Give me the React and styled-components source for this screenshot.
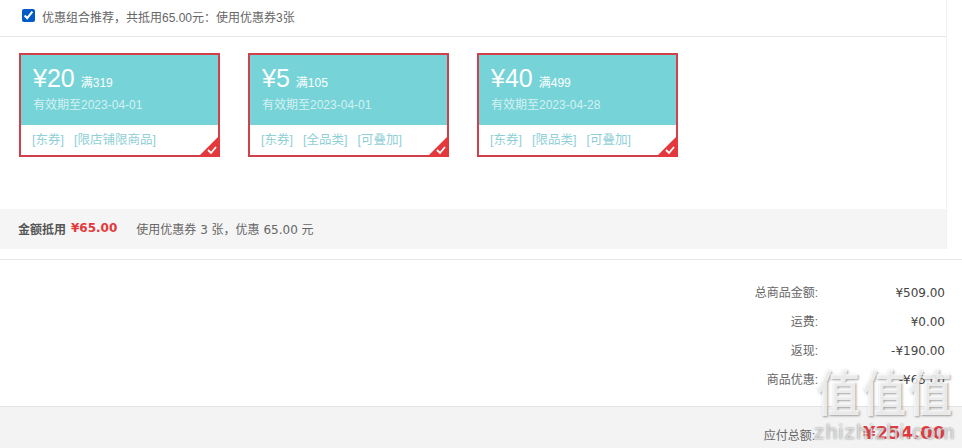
import React from 'react'
import styled, { createGlobalStyle } from 'styled-components'

const Global = createGlobalStyle`
	html, body {
		margin: 0;
		padding: 0;
		background: #fff;
		overflow: hidden;
	}
	body {
		font-family: "Liberation Sans", "Noto Sans CJK SC", sans-serif;
		font-size: 12px;
		color: #666;
	}
`

const Page = styled.div`
	position: relative;
	width: 962px;
	height: 448px;
	overflow: hidden;
`
const Panel = styled.div`
	width: 947px;
	height: 249px;
	border-right: 1px solid #f1f1f1;
	box-sizing: border-box;
`
const Recommend = styled.label`
	display: flex;
	align-items: center;
	height: 37px;
	padding: 0 0 3px 22px;
	box-sizing: border-box;
	border-bottom: 1px solid #e6e6e6;
`
const Check = styled.input`
	width: 13px;
	height: 13px;
	margin: 0 7px 3px 0;
	accent-color: #0075ff;
`
const Coupons = styled.div`
	display: flex;
	gap: 28px;
	height: 172px;
	padding: 16px 0 0 19px;
	box-sizing: border-box;
`
const Coupon = styled.div`
	position: relative;
	width: 201px;
	height: 104px;
	border: 2px solid #d0414b;
	box-sizing: border-box;
`
const CouponTop = styled.div`
	height: 70px;
	padding: 8px 0 0 12px;
	box-sizing: border-box;
	background: #76d3d7;
	color: #fff;
`
const Amount = styled.div`
	display: flex;
	align-items: baseline;
	height: 30px;
	font-size: 25px;
	line-height: 30px;
`
const Limit = styled.span`
	margin-left: 6px;
	font-size: 12px;
	font-weight: 400;
`
const Expire = styled.div`
	margin-top: 4px;
	font-size: 12px;
	line-height: 16px;
	color: #d5f1f3;
`
const Tags = styled.div`
	display: flex;
	gap: 10px;
	padding: 7px 0 0 11px;
	font-size: 12.5px;
	line-height: 16px;
	color: #8fcfd6;
`
const Corner = styled.svg`
	position: absolute;
	right: -2px;
	bottom: -2px;
`
const Summary = styled.div`
	display: flex;
	align-items: center;
	height: 40px;
	padding: 0 0 2px 18px;
	box-sizing: border-box;
	background: #f5f5f5;
`
const SummaryLabel = styled.b`
	color: #555;
`
const SummaryPrice = styled.b`
	margin: 0 19px 0 5px;
	font-family: "DejaVu Sans", sans-serif;
	font-size: 12px;
	color: #e4393c;
`
const SummaryText = styled.span`
	font-family: "DejaVu Sans", "Noto Sans CJK SC", sans-serif;
	font-size: 12px;
	color: #666;
`
const Totals = styled.div`
	margin-top: 10px;
	height: 147px;
	padding-top: 20px;
	box-sizing: border-box;
	border-top: 1px solid #e9e9e9;
`
const Row = styled.div`
	display: flex;
	justify-content: flex-end;
	height: 29px;
	padding-right: 17px;
	line-height: 26px;
`
const RowLabel = styled.span`
	width: 100px;
	text-align: right;
`
const RowValue = styled.span`
	width: 127px;
	text-align: right;
	font-family: "DejaVu Sans", sans-serif;
	font-size: 12px;
	color: #444;
`
const Payable = styled.div`
	display: flex;
	justify-content: flex-end;
	align-items: flex-end;
	height: 43px;
	padding: 0 17px 6px 0;
	box-sizing: border-box;
	background: #f3f3f3;
	border-top: 1px solid #e2e2e2;
`
const PayableValue = styled.b`
	width: 130px;
	text-align: right;
	font-family: "DejaVu Sans", sans-serif;
	font-size: 18px;
	color: #e4393c;
`
const Watermark = styled.div`
	position: absolute;
	left: 816px;
	top: 363px;
	font-family: "Noto Sans CJK SC", sans-serif;
	font-size: 44px;
	font-weight: 700;
	line-height: 54px;
	letter-spacing: 2px;
	color: rgba(255, 255, 255, 0.8);
	text-shadow: 1px 1px 2px rgba(120, 120, 120, 0.7);
	transform: scaleY(1.12);
`
const WatermarkUrl = styled.div`
	position: absolute;
	left: 814px;
	top: 420px;
	font-family: "Liberation Sans", sans-serif;
	font-size: 21px;
	letter-spacing: 1.2px;
	color: rgba(255, 255, 255, 0.6);
	text-shadow: 0 0 2px #777;
`

const coupons = [
	{ amount: '¥20', limit: '满319', date: '2023-04-01', tags: ['[东券]', '[限店铺限商品]'] },
	{ amount: '¥5', limit: '满105', date: '2023-04-01', tags: ['[东券]', '[全品类]', '[可叠加]'] },
	{ amount: '¥40', limit: '满499', date: '2023-04-28', tags: ['[东券]', '[限品类]', '[可叠加]'] }
]

const rows = [
	['总商品金额:', '¥509.00'],
	['运费:', '¥0.00'],
	['返现:', '-¥190.00'],
	['商品优惠:', '-¥65.00']
]

const App = () => {
	return (
		<Page>
			<Global />
			<Panel>
				<Recommend>
					<Check type="checkbox" defaultChecked />
					优惠组合推荐，共抵用65.00元：使用优惠券3张
				</Recommend>
				<Coupons>
					{coupons.map(c => (
						<Coupon key={c.amount}>
							<CouponTop>
								<Amount>
									{c.amount}
									<Limit>{c.limit}</Limit>
								</Amount>
								<Expire>有效期至{c.date}</Expire>
							</CouponTop>
							<Tags>
								{c.tags.map(t => (
									<span key={t}>{t}</span>
								))}
							</Tags>
							<Corner width="22" height="22" viewBox="0 0 22 22">
								<path d="M22 0V22H0Z" fill="#e4393c" />
								<path d="M10 15l3 3 5-6" fill="none" stroke="#fff" strokeWidth="1.8" />
							</Corner>
						</Coupon>
					))}
				</Coupons>
				<Summary>
					<SummaryLabel>金额抵用</SummaryLabel>
					<SummaryPrice>¥65.00</SummaryPrice>
					<SummaryText>使用优惠券 3 张，优惠 65.00 元</SummaryText>
				</Summary>
			</Panel>
			<Totals>
				{rows.map(([label, value]) => (
					<Row key={label}>
						<RowLabel>{label}</RowLabel>
						<RowValue>{value}</RowValue>
					</Row>
				))}
			</Totals>
			<Payable>
				<RowLabel>应付总额:</RowLabel>
				<PayableValue>¥254.00</PayableValue>
			</Payable>
			<Watermark>值值值</Watermark>
			<WatermarkUrl>zhizhizhi.com</WatermarkUrl>
		</Page>
	)
}

export default App
